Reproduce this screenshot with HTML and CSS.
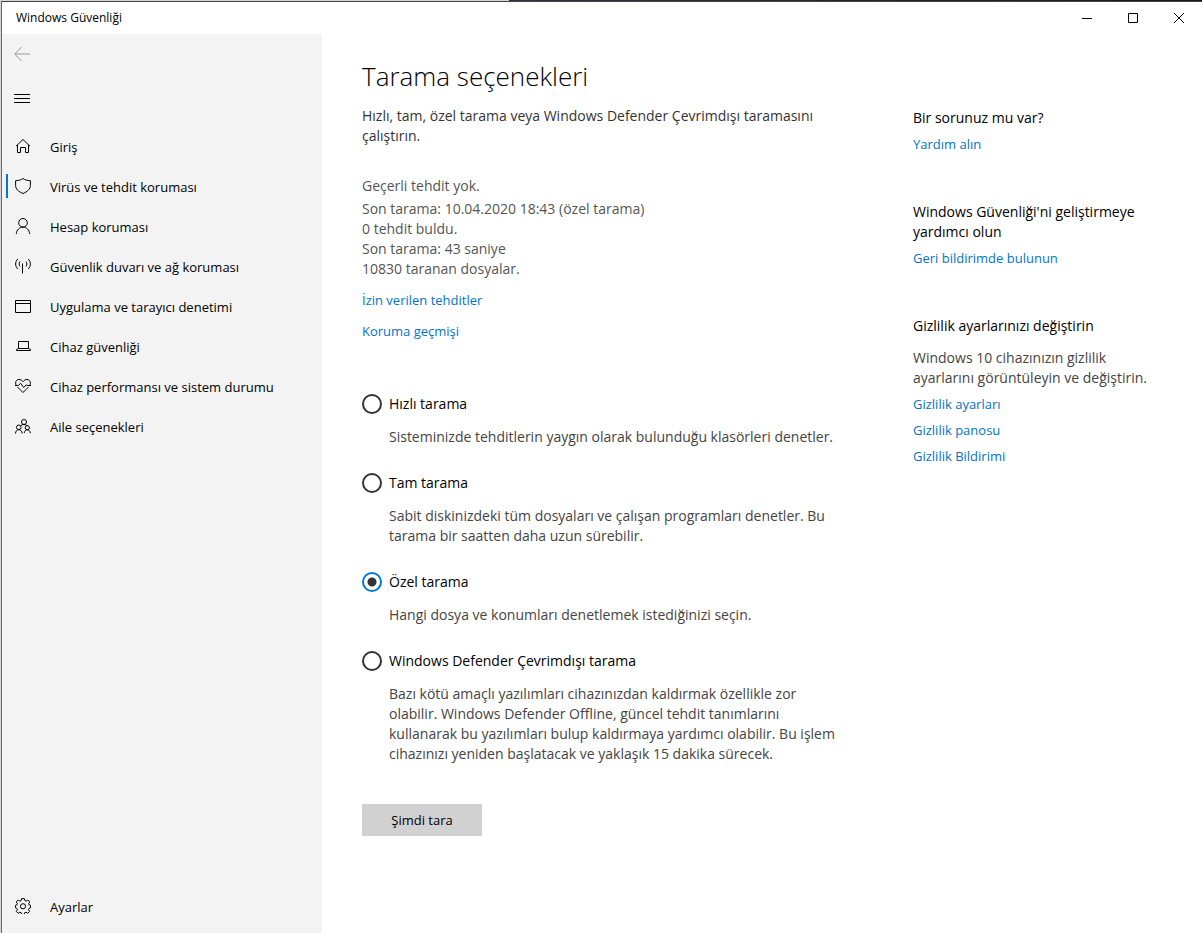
FILE: index.html
```html
<!DOCTYPE html>
<html lang="tr">
<head>
  <meta charset="UTF-8">
  <title>Windows Güvenliği</title>
  <meta name="viewport" content="width=device-width, initial-scale=1.0">
  <link rel="stylesheet" href="styles.css">
</head>
<body>
  <div class="window">
    <header class="titlebar">
      <span class="title">Windows Güvenliği</span>
      <div class="window-buttons">
        <button aria-label="Simge durumuna küçült"><svg width="10" height="10" viewBox="0 0 10 10"><path d="M0 5.5h10"/></svg></button>
        <button aria-label="Ekranı kapla"><svg width="10" height="10" viewBox="0 0 10 10"><path d="M.5.5h9v9h-9z"/></svg></button>
        <button aria-label="Kapat"><svg width="10" height="10" viewBox="0 0 10 10"><path d="M0 0l10 10M10 0L0 10"/></svg></button>
      </div>
    </header>

    <div class="layout">
      <!-- Sol menü -->
      <aside class="sidebar">
        <button class="icon-button back" aria-label="Geri" disabled>
          <svg width="16" height="16" viewBox="0 0 16 16"><path d="M16 8H1M7.500 1L.7 8l6.800 7"/></svg>
        </button>
        <button class="icon-button menu" aria-label="Menü">
          <svg width="16" height="16" viewBox="0 0 16 16"><path d="M0 4.500h16M0 8.500h16M0 12.500h16"/></svg>
        </button>

        <nav class="nav">
          <a href="#">
            <svg width="16" height="16" viewBox="0 0 16 16"><path d="M1 8.200L8 1.500l7 6.700M2.500 7v7.500h3v-5h5v5h3V7"/></svg>
            Giriş
          </a>
          <a href="#" class="active">
            <svg width="16" height="16" viewBox="0 0 16 16"><path d="M8 .5C6 2 3.500 2.600.6 2.700v4.800C.6 11 3.500 13.700 8 15.500c4.500-1.800 7.400-4.500 7.400-8V2.700C12.500 2.600 10 2 8 .5z"/></svg>
            Virüs ve tehdit koruması
          </a>
          <a href="#">
            <svg width="16" height="16" viewBox="0 0 16 16"><circle cx="8" cy="4.800" r="4.300"/><path d="M1.300 16C1.500 11.800 4.500 9.100 8 9.100s6.500 2.700 6.700 6.900"/></svg>
            Hesap koruması
          </a>
          <a href="#">
            <svg width="16" height="16" viewBox="0 0 16 16"><path d="M7.500 5.500v10M5 3.500C3.900 5 3.900 7 5 8.500M11 3.500c1.100 1.500 1.100 3.500 0 5M2.800 1C-.1 4-.1 8 2.800 11M13.200 1c2.900 3 2.900 7 0 10"/></svg>
            Güvenlik duvarı ve ağ koruması
          </a>
          <a href="#">
            <svg width="16" height="16" viewBox="0 0 16 16"><path d="M.5 2.500h15v12H.5zM.5 5.500h15"/></svg>
            Uygulama ve tarayıcı denetimi
          </a>
          <a href="#">
            <svg width="16" height="16" viewBox="0 0 16 16"><path d="M3.500 3.500h10v7h-10zM3.500 10.500l-2 1v1h14v-1l-2-1"/></svg>
            Cihaz güvenliği
          </a>
          <a href="#">
            <svg width="16" height="16" viewBox="0 0 16 16"><path d="M1.200 7.300C-.3 4.300 1.300 1.500 4 1.500c1.700 0 3 .8 4 2.200 1-1.400 2.300-2.200 4-2.200 2.700 0 4.300 2.800 2.800 5.800M2.500 9L8 14.500 13.500 9M0 7.500h3.500l2-2.300 3.200 4.300 2.500-2.700 1 .7H16"/></svg>
            Cihaz performansı ve sistem durumu
          </a>
          <a href="#">
            <svg width="16" height="16" viewBox="0 0 16 16"><circle cx="9" cy="4" r="2.500"/><circle cx="3.800" cy="9.300" r="2.300"/><circle cx="12.300" cy="9.700" r="2.100"/><path d="M.5 15.500c.1-2.400 1.500-3.800 3.300-3.800S7 13.100 7.200 15.500M9.200 15c.3-2 1.500-3.200 3.100-3.200s2.900 1.300 3.100 3.400M5.500 7.800C6.300 7 7.400 6.500 9 6.500c1.500 0 2.600.5 3.300 1.300"/></svg>
            Aile seçenekleri
          </a>
        </nav>

        <nav class="nav nav-bottom">
          <a href="#">
            <svg width="16" height="16" viewBox="0 0 16 16"><path d="M6.600.6h2.800l.4 2 1.300.5 1.700-1.100 1.900 1.900-1.100 1.800.5 1.200 1.400.4v2.600l-1.500.5-.5 1.300 1.100 1.700-1.900 1.900-1.700-1.100-1.300.5-.4 1.700H6.600l-.4-1.700-1.300-.5-1.700 1.100-1.900-1.900 1.100-1.700-.5-1.300L.5 9.900V7.300l1.400-.4.5-1.200L1.300 3.900 3.200 2l1.700 1.100 1.300-.5z"/><circle cx="8" cy="8.300" r="2.600"/></svg>
            Ayarlar
          </a>
        </nav>
      </aside>

      <main class="content">
        <section class="scan">
          <h1>Tarama seçenekleri</h1>
          <p class="intro">Hızlı, tam, özel tarama veya Windows Defender Çevrimdışı taramasını çalıştırın.</p>

          <div class="status">
            <p class="threat">Geçerli tehdit yok.</p>
            <p>Son tarama: 10.04.2020 18:43 (özel tarama)</p>
            <p>0 tehdit buldu.</p>
            <p>Son tarama: 43 saniye</p>
            <p>10830 taranan dosyalar.</p>
          </div>

          <div class="scan-links">
            <a href="#">İzin verilen tehditler</a>
            <a href="#">Koruma geçmişi</a>
          </div>

          <form>
            <div class="option">
              <input type="radio" name="tarama" id="hizli">
              <label for="hizli">Hızlı tarama</label>
              <p>Sisteminizde tehditlerin yaygın olarak bulunduğu klasörleri denetler.</p>
            </div>
            <div class="option">
              <input type="radio" name="tarama" id="tam">
              <label for="tam">Tam tarama</label>
              <p>Sabit diskinizdeki tüm dosyaları ve çalışan programları denetler. Bu tarama bir saatten daha uzun sürebilir.</p>
            </div>
            <div class="option">
              <input type="radio" name="tarama" id="ozel" checked>
              <label for="ozel">Özel tarama</label>
              <p>Hangi dosya ve konumları denetlemek istediğinizi seçin.</p>
            </div>
            <div class="option">
              <input type="radio" name="tarama" id="cevrimdisi">
              <label for="cevrimdisi">Windows Defender Çevrimdışı tarama</label>
              <p>Bazı kötü amaçlı yazılımları cihazınızdan kaldırmak özellikle zor olabilir. Windows Defender Offline, güncel tehdit tanımlarını kullanarak bu yazılımları bulup kaldırmaya yardımcı olabilir. Bu işlem cihazınızı yeniden başlatacak ve yaklaşık 15 dakika sürecek.</p>
            </div>
            <button type="button" class="scan-button">Şimdi tara</button>
          </form>
        </section>

        <!-- Sağ taraftaki yardım bağlantıları -->
        <aside class="help">
          <section>
            <h2>Bir sorunuz mu var?</h2>
            <a href="#">Yardım alın</a>
          </section>
          <section>
            <h2>Windows Güvenliği'ni geliştirmeye yardımcı olun</h2>
            <a href="#">Geri bildirimde bulunun</a>
          </section>
          <section>
            <h2>Gizlilik ayarlarınızı değiştirin</h2>
            <p>Windows 10 cihazınızın gizlilik ayarlarını görüntüleyin ve değiştirin.</p>
            <a href="#">Gizlilik ayarları</a>
            <a href="#">Gizlilik panosu</a>
            <a href="#">Gizlilik Bildirimi</a>
          </section>
        </aside>
      </main>
    </div>
  </div>
</body>
</html>
```
FILE: styles.css
```css
* {
  box-sizing: border-box;
  margin: 0;
  padding: 0;
}

body {
  font-family: "Segoe UI", "Open Sans", "Noto Sans", sans-serif;
  font-size: 14px;
  line-height: 20px;
  color: #000;
  min-height: 100vh;
  display: flex;
  padding: 1px 0 0 1px;
  background: linear-gradient(90deg, #d6d6d6 509px, #35323d 509px, #17181c);
}

.window {
  flex: 1;
  display: flex;
  flex-direction: column;
  background: #fff;
  border-top: 1px solid #444;
  border-left: 1px solid #666;
}

svg {
  fill: none;
  stroke: #000;
  stroke-width: 1;
  flex-shrink: 0;
}

button {
  font: inherit;
  color: inherit;
  border: none;
  background: none;
}

a {
  font-size: 13px;
  color: #0074cc;
  text-decoration: none;
}

/* Başlık çubuğu */
.titlebar {
  display: flex;
  justify-content: space-between;
  align-items: center;
  height: 32px;
  padding-left: 14px;
}

.title {
  font-size: 12px;
}

.window-buttons {
  display: flex;
}

.window-buttons button {
  width: 46px;
  height: 32px;
  display: flex;
  align-items: center;
  justify-content: center;
}

.layout {
  flex: 1;
  display: flex;
}

/* Sol menü */
.sidebar {
  width: 320px;
  flex-shrink: 0;
  display: flex;
  flex-direction: column;
  background: #f3f3f3;
  padding-bottom: 6px;
}

.icon-button {
  width: 40px;
  height: 40px;
  display: flex;
  align-items: center;
  justify-content: center;
}

.back svg {
  stroke: #999;
}

.menu {
  margin: 4px 0 9px;
}

.nav a {
  display: flex;
  align-items: center;
  gap: 19px;
  height: 40px;
  padding-left: 9px;
  border-left: 4px solid transparent;
  color: #000;
}

.nav svg {
  margin-bottom: 2px;
}

.nav .active {
  position: relative;
}

.nav .active::before {
  content: "";
  position: absolute;
  left: 0;
  top: 7px;
  width: 2px;
  height: 24px;
  background: #0078d7;
}

.nav-bottom {
  margin-top: auto;
}

/* İçerik */
.content {
  flex: 1;
  display: flex;
  gap: 71px;
  padding: 24px 40px 0;
}

.scan {
  width: 480px;
}

h1 {
  font-size: 26px;
  font-weight: 300;
  line-height: 36px;
  margin-bottom: 12px;
}

.intro {
  color: #333;
  margin-bottom: 30px;
}

.status {
  color: #555;
  margin-bottom: 11px;
}

.threat {
  margin-bottom: 3px;
}

.scan-links {
  display: flex;
  flex-direction: column;
  align-items: flex-start;
  gap: 11px;
  margin-bottom: 53px;
}

.option {
  display: grid;
  grid-template-columns: 20px 1fr;
  column-gap: 7px;
  row-gap: 13px;
  margin-bottom: 26px;
}

.option p {
  grid-column: 2;
  color: #444;
}

.option input {
  appearance: none;
  width: 20px;
  height: 20px;
  border: 2px solid #333;
  border-radius: 50%;
}

.option input:checked {
  border-color: #0078d7;
  background: radial-gradient(circle, #333 4px, transparent 5px);
}

.scan-button {
  width: 120px;
  height: 32px;
  margin-top: 14px;
  font-size: 13px;
  background: #d1d1d1;
}

/* Yardım sütunu */
.help {
  flex: 1;
  padding-top: 50px;
}

.help section {
  display: flex;
  flex-direction: column;
  align-items: flex-start;
  gap: 6px;
  margin-bottom: 48px;
}

.help h2 {
  font-size: 14px;
  font-weight: 400;
}

.help p {
  color: #444;
  margin-top: 6px;
}
```
